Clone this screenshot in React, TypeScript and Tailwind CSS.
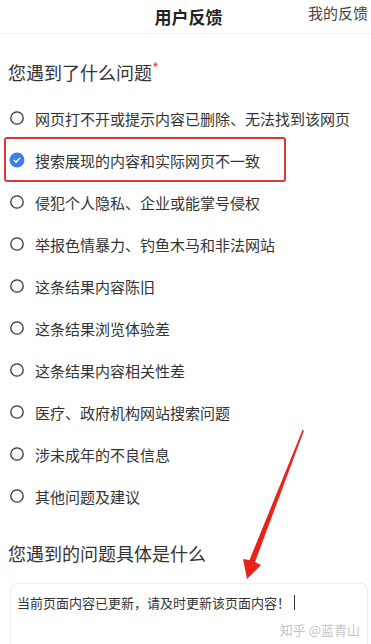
import React from "react";

const OPTIONS = [
  "网页打不开或提示内容已删除、无法找到该网页",
  "搜索展现的内容和实际网页不一致",
  "侵犯个人隐私、企业或能掌号侵权",
  "举报色情暴力、钓鱼木马和非法网站",
  "这条结果内容陈旧",
  "这条结果浏览体验差",
  "这条结果内容相关性差",
  "医疗、政府机构网站搜索问题",
  "涉未成年的不良信息",
  "其他问题及建议",
];

const SELECTED = 1;

function Radio({ checked }: { checked: boolean }) {
  if (checked) {
    return (
      <svg width="16" height="16" viewBox="0 0 16 16" className="shrink-0">
        <circle cx="8" cy="8" r="7.5" fill="#3d7ee6" />
        <path d="M5 8.2l2 1.9 3.8-3.8" fill="none" stroke="#fff" strokeWidth={1.5} strokeLinecap="round" strokeLinejoin="round" />
      </svg>
    );
  }
  return (
    <svg width="16" height="16" viewBox="0 0 16 16" className="shrink-0">
      <circle cx="8" cy="8" r="6.2" fill="none" stroke="#333" strokeWidth={1.3} />
    </svg>
  );
}

export default function App() {
  return (
    <div
      className="relative w-[371px] h-[644px] overflow-hidden bg-white text-[#333]"
      style={{ fontFamily: '"Noto Sans CJK SC", "Noto Sans", sans-serif' }}
    >
      {/* Header */}
      <div className="relative h-[34px] border-b border-[#f3f3f3] flex items-center justify-center">
        <span className="text-[17px] font-bold text-[#222] leading-none pl-[6px]">用户反馈</span>
        <span className="absolute left-[308px] top-[5px] text-[15px] text-[#444] leading-none whitespace-nowrap">我的反馈</span>
      </div>

      {/* Question 1 */}
      <div className="mt-[26px] px-[8px] h-[24px] flex items-center text-[18px] leading-none text-[#333]">
        您遇到了什么问题<span className="text-[#d9534f] text-[15px] self-start">*</span>
      </div>

      <div className="mt-[13px] flex flex-col">
        {OPTIONS.map((opt, i) => (
          <div key={opt} className="relative h-[42px] flex items-center gap-[10px] pl-[9px]">
            <Radio checked={i === SELECTED} />
            <span className="text-[15px] leading-none whitespace-nowrap">{opt}</span>
            {i === SELECTED && (
              <div className="absolute left-[4px] top-[-2px] w-[282px] h-[45px] border-2 border-[#d93a33] rounded-[3px]" />
            )}
          </div>
        ))}
      </div>

      {/* Question 2 */}
      <div className="mt-[24px] px-[8px] h-[24px] flex items-center text-[18px] leading-none text-[#333]">
        您遇到的问题具体是什么
      </div>

      <div className="mt-[18px] ml-[10px] mr-[3px] h-[80px] rounded-[7px] border border-[#eeeeee] pl-[6px] pr-[7px] pt-[11px]">
        <div className="flex items-center text-[13px] leading-none text-[#333] whitespace-nowrap">
          当前页面内容已更新，请及时更新该页面内容！
          <span className="ml-[4px] inline-block w-px h-[15px] bg-[#333]" />
        </div>
        <div className="mt-[13px] text-right text-[13px] leading-none text-[#c4c4c4] whitespace-nowrap">
          知乎 @蓝青山
        </div>
      </div>

      {/* Red annotation arrow */}
      <svg className="absolute left-0 top-0 pointer-events-none" width="371" height="644" viewBox="0 0 371 644">
        <polygon points="302.5,430 304,430.5 255,562 261,565 247,579 243,559 249.5,560" fill="#e8231c" />
      </svg>
    </div>
  );
}
